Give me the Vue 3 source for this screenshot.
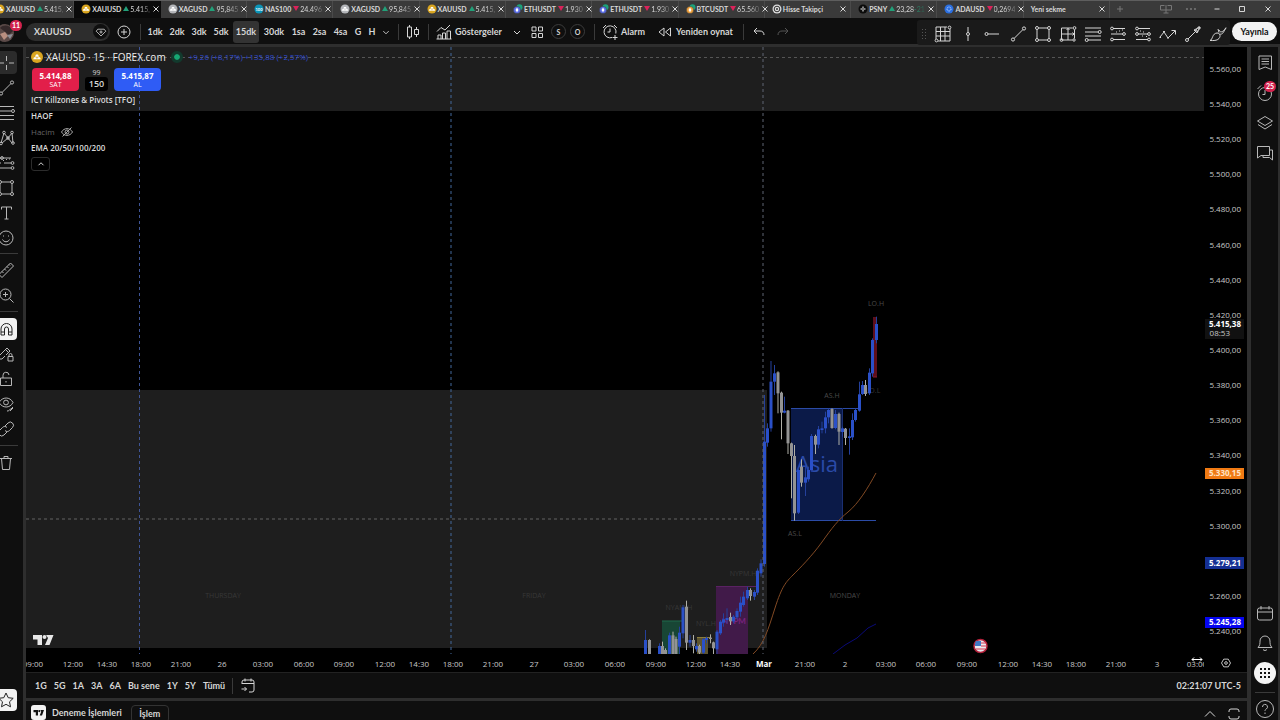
<script setup>
const c = (x, y, r) => `M${x - r} ${y}a${r} ${r} 0 1 0 ${2 * r} 0a${r} ${r} 0 1 0 ${-2 * r} 0`

const icons = {
  cross: 'M10.5 3v5M10.5 12v5M3 10h5M13 10h5',
  trend: 'M6 14.5L15 5.5' + c(5, 15.5, 1.6) + c(16, 4.5, 1.6),
  fib: 'M3 3.5h15M3 8h12M3 12.5h15M3 16.5h15' + c(17, 8, 1.5),
  pattern: 'M5 15L8 5l4 5l4-5l1 10M6 15l6-5l4 5' + c(8, 4.5, 1.3) + c(12, 10, 1.3) + c(16, 4.5, 1.3) + c(17, 15, 1.3) + c(5, 15.5, 1.3),
  forecast: 'M3 5h12M3 10h2M8 10h7M3 15h12M7 7.5h1M10 6.5h1M13 6h1' + c(16.5, 10, 1.4) + c(16.5, 15, 1.4) + c(6, 5, 1.4),
  rect: 'M5.5 4h9M5.5 16h9M4 5.5v9M16 5.5v9' + c(4, 4, 1.5) + c(16, 4, 1.5) + c(4, 16, 1.5) + c(16, 16, 1.5),
  text: 'M5.500 6.500v-2.500h10v2.500M10.500 4v12M8.500 16h4',
  smile: c(10, 10, 7) + 'M7.500 7.500v1M12.500 7.500v1M6.500 11.500c1.500 3 5.500 3 7 0',
  ruler: 'M3 14.500L14.500 3l3 3L6 17.500zM6 11.500l1.500 1.500M8.500 9l1.500 1.500M11 6.500l1.500 1.500M13 4.500l1 1',
  zoom: c(9.5, 9.5, 5.5) + 'M13.500 13.500l4 4M9.500 7v5M7 9.500h5',
  magnet: 'M5 16V10a5.500 5.500 0 0 1 11 0v6h-3.500v-6a2 2 0 0 0-4 0v6zM5 13h3.500M12.500 13H16',
  penlock: 'M3 12L11 4l3 3l-4 4M3 12v3h3l3-3M12 12.500h5v4.500h-5zM13 12.500v-1.500a1.500 1.500 0 0 1 3 0v1.500M9.500 5.500l3 3',
  lock: 'M4.500 9h11v7.500h-11zM7 9V6.500a3 3 0 0 1 6-.500M10 12v1.500',
  eye: 'M3 8.500c3.500-6 11-6 14 0c-3 6-10.500 6-14 0z' + c(10, 8.5, 2.4) + 'M11 17c2 .500 2.500-2 4-2l2-2M14 17l3-3',
  link: 'M9 7l3-3a3 3 0 0 1 4.500 4.500l-3 3a3 3 0 0 1-4.500 0M11 13l-3 3a3 3 0 0 1-4.500-4.500l3-3a3 3 0 0 1 4.500 0',
  trash: 'M4 5.500h12M5.500 5.500l1 11h7l1-11M8 5.500v-2h4v2',
  star: 'M10 3l2.200 4.700l5 .600l-3.700 3.500l1 5L10 14.300l-4.500 2.500l1-5L2.800 8.300l5-.600z',
  vline: 'M10 3v5.500M10 11.500V17' + c(10, 10, 1.5),
  hray: 'M5 10h11' + c(3.5, 10, 1.5),
  gridTool: 'M3 3h11M3 3v12M5 17h12M17 5v12M3 7.500h14M3 12h14M7.500 3v14M12 3v14' + c(16.5, 3.5, 1.4) + c(3.5, 16.5, 1.4),
  range: 'M3.500 4h11M3.500 4v12h11M16.500 5.500v9M10 4v12M3.500 10h13M8.500 6L10 4.500L11.500 6M14.500 8.500L16 10l-1.500 1.500' + c(16.5, 4, 1.4) + c(3.5, 16, 1.4) + c(16, 16, 1.2),
  fibH: 'M2 4h16M2 8h13M2 12h16M5 16h13' + c(16.7, 8, 1.5) + c(3.7, 16, 1.5),
  longPos: 'M5 4.500h12M3 10h12M5 15.500h12M8 8h1M11 7h1M14 6h1' + c(4, 4.5, 1.4) + c(16, 10, 1.4) + c(4, 15.5, 1.4),
  shortPos: 'M5 4.500h12M5 10h10M3 15.500h12M7 7h1M10 8h1M13 12.500h1M9 12h1' + c(4, 4.5, 1.4) + c(4, 10, 1.4) + c(16, 10, 1.4) + c(16, 15.5, 1.4),
  path: 'M2 13l4-5l4 6l7-7M13.500 6.500h4v4M1.500 13.500h1.500M5 7.500h2M9 14h2',
  arrowLine: 'M5 15L13 7' + c(4, 16, 1.5) + 'M11 6l6-3l-3 6zM12 6l3 2M13 5l2 3' + c(16, 4, 1.2),
  brush: 'M2 16.500c3-1 2-7 7-7.500c3 0 4 3 2 5.500c-2 2.500-6 2-9 2zM11 8.500l-1-3.500M11 6c1 3 4 2.500 7-2.500M11.500 10c3 1 4-2 6.500-6',
  bars: 'M6.500 3v2M4.500 5h4v10h-4zM6.500 15v2M13.500 5v2.500M11.500 7.500h4v5h-4zM13.500 12.500V15',
  indicators: 'M3 9.500l4-4l4 2.500l5-5M4 17v-4h3v4M8.500 17v-6h3v6M13 17V9h3.500v8M2.500 17h15',
  grid: 'M5 5h4v4H5zM11.500 5h4v4h-4zM5 11.500h4v4H5zM11.500 11.500h4v4h-4z',
  alarm: 'M12 15.500a6 6 0 1 1 3.800-4M10 6.500V10H7.500M3 6l3-3M14 3l3 3M15 13v5M12.500 15.500h5',
  replay: 'M9 6v8L4 10zM15.500 6v8L10.500 10z',
  undo: 'M8 6L5 9l3 3M5 9h6c2.500 0 4 1.500 4 4',
  redo: 'M12 6l3 3l-3 3M15 9H9c-2.500 0-4 1.500-4 4',
  chev: 'M7 9l3 3l3-3',
  chevUp: 'M5 12.500l5-5l5 5',
  plusCircle: c(10, 10, 6) + 'M10 7v6M7 10h6',
  gem: 'M6 6.500h8l2 2.500l-6 6l-6-6zM10 8v4M8 10h4',
  watch: 'M4 3h12.500v13.500L10.200 14L4 16.500zM6.500 6h7.500M6.500 8.500h7.500M6.500 11h7.500',
  clock: c(10, 11, 6.5) + 'M10 7v4.500H7.500M2.500 6l3.500-3.500',
  layers: 'M10 3.500l7.500 4.500L10 12.500L2.500 8zM3 11.500l7 4.500l7-4.500',
  chat: 'M2.500 3.500h12v9H6l-3.500 2.500zM14.500 7h3v10l-3-2.500H8v-2',
  calendar: 'M4.500 5h11a2 2 0 0 1 2 2v8a2 2 0 0 1-2 2h-11a2 2 0 0 1-2-2V7a2 2 0 0 1 2-2zM2.500 9h15M6 3v3.500M14 3v3.500',
  bell: 'M3 14.500c2-2 2-4 2-6.500a5 5 0 0 1 10 0c0 2.500 0 4.500 2 6.500zM8 16.500c1 1.300 3 1.300 4 0',
  help: c(10, 10, 8.5) + 'M7.500 8a2.500 2.500 0 1 1 3.800 2c-1 .700-1.300 1-1.300 2M10 13.500v1.500',
  goto: 'M4 8V6a2 2 0 0 1 2-2h8a2 2 0 0 1 2 2v8a2 2 0 0 1-2 2h-3M4 7.500h12M7 2.500v3M13 2.500v3M3.500 13h5M6.500 11l2 2l-2 2',
  maximise: 'M5 8V7a2 2 0 0 1 2-2h6a2 2 0 0 1 2 2v1M5 12v1a2 2 0 0 0 2 2h6a2 2 0 0 0 2-2v-1',
  gear: 'M7.500 5.700h5L15 10l-2.500 4.300h-5L5 10z' + c(10, 10, 1.5),
  hidden: 'M4.500 10c2.500-4.500 8.500-4.500 11 0c-2.500 4.500-8.500 4.500-11 0zM5.500 14.500l9-9' + c(10, 10, 2),
  close: 'M7.500 7.500l5 5M12.500 7.500l-5 5',
  plus: 'M10 7v6M7 10h6',
  min: 'M7.500 10h5',
  box: 'M7.500 7.500h5v5h-5z',
  board: 'M8.500 6.500h-4v4.500h11v-4.500h-4M10 6v8M7.500 14h5',
  dots: c(6, 10, 0.7) + c(10, 10, 0.7) + c(14, 10, 0.7),
}

const tabs = [
  { n: 'XAUUSD', k: 'gold', up: true, p: '5.415,' },
  { n: 'XAUUSD', k: 'gold', up: true, p: '5.415,', active: true },
  { n: 'XAGUSD', k: 'silver', up: true, p: '95,845' },
  { n: 'NAS100', k: 'nas', up: false, p: '24.496' },
  { n: 'XAGUSD', k: 'silver', up: true, p: '95,845' },
  { n: 'XAUUSD', k: 'gold', up: true, p: '5.415,' },
  { n: 'ETHUSDT', k: 'eth', up: false, p: '1.930' },
  { n: 'ETHUSDT', k: 'eth', up: false, p: '1.930' },
  { n: 'BTCUSDT', k: 'btc', up: false, p: '65.560' },
  { n: 'Hisse Takipçi', k: 'hisse' },
  { n: 'PSNY', k: 'psny', up: true, p: '23,28', d: '-21' },
  { n: 'ADAUSD', k: 'ada', up: false, p: '0,2694' },
  { n: 'Yeni sekme' },
]

const intervals = [
  ['1dk', 'dk'], ['2dk', 'dk'], ['3dk', 'dk'], ['5dk', 'dk'], ['15dk', 'dk2'], ['30dk', 'dk3'],
  ['1sa', 'sa'], ['2sa', 'sa'], ['4sa', 'sa'], ['G', 'g'], ['H', 'g'],
]
const favourites = ['gridTool', 'vline', 'hray', 'trend', 'rect', 'range', 'fibH', 'longPos', 'shortPos', 'path', 'arrowLine', 'brush']
const tools = [
  ['cross', 'trend', 'fib', 'pattern', 'forecast', 'rect', 'text', 'smile'],
  ['ruler', 'zoom'],
  ['magnet', 'penlock', 'lock', 'eye', 'link'],
  ['trash'],
]
const ranges = ['1G', '5G', '1A', '3A', '6A', 'Bu sene', '1Y', '5Y', 'Tümü']

const priceY = (p) => 68.7 + ((5560 - p) / 20) * 35.16
const prices = Array.from({ length: 17 }, (_, i) => 5560 - i * 20).filter((p) => p !== 5280)
const fmt = (p) => `5.${p - 5000},00`

const times = [
  ['09:00', 33], ['12:00', 73], ['14:30', 107], ['18:00', 141], ['21:00', 181], ['26', 222], ['03:00', 263], ['06:00', 304],
  ['09:00', 344], ['12:00', 385], ['14:30', 419], ['18:00', 453], ['21:00', 493], ['27', 534], ['03:00', 574], ['06:00', 615],
  ['09:00', 656], ['12:00', 696], ['14:30', 730], ['Mar', 764], ['21:00', 805], ['2', 845], ['03:00', 886], ['06:00', 926],
  ['09:00', 967], ['12:00', 1008], ['14:30', 1042], ['18:00', 1076], ['21:00', 1116], ['3', 1157], ['03:00', 1197],
]

// x, body top, body bottom, wick top, wick bottom, rising; in thirds of a pixel from (640, 280)
const candles = [
  [17, 1080, 1123, 1050, 1123, 1], [28, 1080, 1123, 1078, 1123, 0], [58, 1098, 1123, 1090, 1123, 1], [68, 1098, 1123, 1085, 1123, 0],
  [77, 1110, 1123, 1105, 1123, 0], [89, 1066, 1123, 1058, 1123, 1], [99, 1066, 1123, 1055, 1123, 0], [108, 1077, 1123, 1070, 1123, 0],
  [119, 1058, 1100, 1040, 1123, 1], [129, 982, 1060, 975, 1075, 1], [140, 980, 1088, 962, 1110, 0], [150, 1080, 1088, 1065, 1100, 1],
  [160, 1080, 1098, 1065, 1120, 0], [170, 1098, 1108, 1090, 1115, 1], [179, 1098, 1118, 1094, 1123, 0], [190, 1078, 1118, 1074, 1123, 1],
  [200, 1074, 1080, 1070, 1090, 1], [211, 1073, 1077, 1063, 1090, 0], [220, 1087, 1105, 1085, 1123, 0], [231, 1055, 1108, 1050, 1123, 1],
  [241, 1025, 1060, 1020, 1065, 1], [251, 1018, 1028, 1000, 1040, 1], [261, 1014, 1020, 985, 1030, 1], [271, 1011, 1024, 998, 1035, 0],
  [281, 1010, 1024, 1005, 1030, 1], [291, 993, 1012, 985, 1018, 1], [301, 968, 995, 950, 1010, 1], [311, 950, 975, 935, 980, 1],
  [322, 930, 955, 920, 960, 1], [332, 930, 948, 925, 962, 0], [343, 936, 950, 930, 960, 1], [353, 872, 938, 865, 945, 1],
  [363, 850, 880, 838, 890, 1], [373, 485, 852, 345, 860, 1], [383, 445, 488, 430, 500, 1], [393, 305, 445, 243, 455, 1],
  [403, 280, 305, 255, 345, 1], [414, 277, 340, 274, 400, 0], [425, 338, 398, 335, 478, 0], [434, 392, 398, 350, 400, 1],
  [444, 392, 490, 390, 522, 0], [454, 490, 528, 488, 655, 0], [464, 528, 700, 495, 722, 0], [475, 570, 698, 565, 702, 1],
  [485, 560, 608, 538, 620, 0], [496, 592, 608, 560, 648, 1], [505, 570, 598, 560, 605, 1], [515, 468, 570, 462, 575, 1],
  [526, 468, 494, 464, 522, 0], [536, 448, 494, 438, 505, 1], [546, 445, 450, 425, 460, 1], [556, 412, 445, 395, 460, 1],
  [566, 390, 412, 385, 430, 1], [576, 387, 444, 385, 446, 0], [587, 402, 444, 390, 448, 1], [597, 402, 455, 398, 495, 0],
  [607, 445, 456, 440, 470, 1], [617, 446, 474, 444, 495, 0], [628, 469, 474, 445, 524, 1], [638, 420, 472, 400, 480, 1],
  [647, 390, 420, 385, 425, 1], [658, 343, 392, 305, 395, 1], [668, 315, 342, 303, 345, 1], [677, 315, 342, 300, 348, 0],
  [688, 278, 340, 265, 345, 1], [698, 180, 280, 175, 290, 1], [709, 132, 180, 110, 190, 1],
].map(([x, a, b, t, w, up]) => ({
  x: Math.round((640 + x / 3) * 2) / 2, top: 280 + a / 3, h: (b - a) / 3, wt: 280 + t / 3, wb: 280 + w / 3, cls: up ? 'up' : 'down',
}))
</script>

<template>
  <div class="app">
    <header class="tabbar">
      <nav class="tabs" aria-label="Sekmeler">
        <div v-for="(t, i) in tabs" :key="i" class="tab" :class="{ active: t.active }">
          <svg v-if="t.k" class="coin" viewBox="0 0 10 10">
            <template v-if="t.k === 'gold' || t.k === 'silver'">
              <circle cx="5" cy="5" r="4.500" :fill="t.k === 'gold' ? '#d9a520' : '#b4b6ba'" />
              <path d="M4 3h2l.700 1.800H3.300zM2.500 5h2l.500 1.700H1.800zM5.500 5h2l.700 1.700H5z" fill="#fff" />
            </template>
            <template v-else-if="t.k === 'nas'">
              <circle cx="5" cy="5" r="4.500" fill="#0b94b8" />
              <text x="5" y="6.500" class="tiny">100</text>
            </template>
            <template v-else-if="t.k === 'eth' || t.k === 'btc'">
              <circle cx="6.500" cy="3.200" r="3" fill="#1ba27a" />
              <circle cx="4" cy="6" r="3.600" :fill="t.k === 'eth' ? '#5b6ee8' : '#f0a13c'" stroke="#3a3a3a" stroke-width=".500" />
              <path d="M4 3.500L5.500 6L4 8.300L2.500 6z" fill="#fff" />
            </template>
            <template v-else-if="t.k === 'hisse'">
              <circle cx="5" cy="5" r="4.500" fill="#ddd" />
              <circle cx="5" cy="5" r="2.800" fill="none" stroke="#333" />
              <circle cx="5" cy="5" r="1" fill="#333" />
            </template>
            <template v-else-if="t.k === 'psny'">
              <circle cx="5" cy="5" r="4.500" fill="#0b0b0b" />
              <path d="M5 2.500v2M5 5.500v2M2.500 5h2M5.500 5h2" stroke="#fff" />
            </template>
            <template v-else>
              <circle cx="5" cy="5" r="4.500" fill="#2b6fe0" />
              <circle cx="5" cy="5" r="2" fill="none" stroke="#cfe0ff" stroke-dasharray="1 .600" />
            </template>
          </svg>
          <span class="tname">{{ t.n }}</span>
          <span v-if="t.p" class="tri" :class="t.up ? 'tup' : 'tdn'"></span>
          <span v-if="t.p" class="tprice">{{ t.p }}<span v-if="t.d" class="delta"> {{ t.d }}</span></span>
          <button class="tclose" aria-label="Kapat"><svg class="ico" viewBox="0 0 20 20"><path :d="icons.close" /></svg></button>
        </div>
      </nav>
      <div class="winctl">
        <button class="faint" aria-label="Yeni sekme aç"><svg class="ico" viewBox="0 0 20 20"><path :d="icons.plus" /></svg></button>
        <button class="faint far" aria-label="Düzen"><svg class="ico" viewBox="0 0 20 20"><path :d="icons.board" /></svg></button>
        <button class="faint" aria-label="Menü"><svg class="ico" viewBox="0 0 20 20"><path :d="icons.dots" /></svg></button>
        <button aria-label="Küçült"><svg class="ico" viewBox="0 0 20 20"><path :d="icons.min" /></svg></button>
        <button aria-label="Büyüt"><svg class="ico" viewBox="0 0 20 20"><path :d="icons.box" /></svg></button>
        <button aria-label="Kapat"><svg class="ico" viewBox="0 0 20 20"><path :d="icons.close" /></svg></button>
      </div>
    </header>

    <div class="toolbar">
      <button class="avatar" aria-label="Profil">
        <svg viewBox="0 0 24 20">
          <circle cx="5" cy="11" r="9" fill="#5b4a48" />
          <path d="M0 6c4-4 10-3 13 3l-4 4l-5-4z" fill="#35292a" />
          <path d="M0 12l5-2l3 4l-4 4z" fill="#b98f80" />
          <path d="M7 13l6-1l-3 5z" fill="#8d8f96" />
        </svg>
        <span class="badge">11</span>
      </button>
      <button class="symbol">XAUUSD<span class="gem"><svg class="ico" viewBox="0 0 20 20"><path :d="icons.gem" /></svg></span></button>
      <button class="tb plus" aria-label="Karşılaştır"><svg class="ico" viewBox="0 0 20 20"><path :d="icons.plusCircle" /></svg></button>
      <i class="vsep s1"></i>
      <button v-for="[n, k] in intervals" :key="n" class="iv" :class="[k, { on: n === '15dk' }]">{{ n }}</button>
      <button class="iv g" aria-label="Aralıklar"><svg class="ico" viewBox="0 0 20 20"><path :d="icons.chev" /></svg></button>
      <i class="vsep s2"></i>
      <button class="tb" aria-label="Mumlar"><svg class="ico" viewBox="0 0 20 20"><path :d="icons.bars" /></svg></button>
      <i class="vsep s3"></i>
      <button class="tb lab ind"><svg class="ico" viewBox="0 0 20 20"><path :d="icons.indicators" /></svg>Göstergeler</button>
      <button class="tb" aria-label="Favoriler"><svg class="ico" viewBox="0 0 20 20"><path :d="icons.chev" /></svg></button>
      <button class="tb" aria-label="Düzenler"><svg class="ico" viewBox="0 0 20 20"><path :d="icons.grid" /></svg></button>
      <button class="ring">S</button>
      <button class="ring">O</button>
      <i class="vsep s4"></i>
      <button class="tb lab al"><svg class="ico" viewBox="0 0 20 20"><path :d="icons.alarm" /></svg>Alarm</button>
      <button class="tb lab rep"><svg class="ico" viewBox="0 0 20 20"><path :d="icons.replay" /></svg>Yeniden oynat</button>
      <i class="vsep s5"></i>
      <button class="tb" aria-label="Geri al"><svg class="ico" viewBox="0 0 20 20"><path :d="icons.undo" /></svg></button>
      <button class="tb dim" aria-label="Yinele"><svg class="ico" viewBox="0 0 20 20"><path :d="icons.redo" /></svg></button>
      <div class="favs">
        <svg class="grip" viewBox="0 0 8 12"><path d="M2 1.500h1M5 1.500h1M2 4.500h1M5 4.500h1M2 7.500h1M5 7.500h1M2 10.500h1M5 10.500h1" /></svg>
        <button v-for="f in favourites" :key="f" :aria-label="f"><svg class="ico" viewBox="0 0 20 20"><path :d="icons[f]" /></svg></button>
      </div>
      <button class="publish">Yayınla</button>
    </div>

    <div class="body">
      <aside class="tools">
        <template v-for="(g, i) in tools" :key="i">
          <hr v-if="i" />
          <button v-for="t in g" :key="t" :class="{ sel: t === 'cross', lit: t === 'magnet' }" :aria-label="t">
            <svg class="ico" viewBox="0 0 20 20"><path :d="icons[t]" /></svg>
          </button>
        </template>
        <button class="lit fav" aria-label="Favori çizimler"><svg class="ico" viewBox="0 0 20 20"><path :d="icons.star" /></svg></button>
      </aside>

      <main class="center">
        <section class="chart">
          <div class="plot">
            <svg class="canvas" role="img" aria-label="XAUUSD 15 dakikalık grafik">
              <rect width="100%" height="64" class="zone" />
              <g transform="translate(-26 -47)">
                <rect x="26" y="390" width="741" height="258" class="zone" />
                <g class="note">
                  <text x="223" y="598">THURSDAY</text>
                  <text x="534" y="598">FRIDAY</text>
                  <text x="743" y="576">NYPM.H</text>
                  <text x="679" y="610">NYAM.H</text>
                  <text x="706" y="626">NYL.H</text>
                  <text x="873" y="393">LO.L</text>
                </g>
                <g class="note lighter">
                  <text x="845" y="598">MONDAY</text>
                  <text x="876" y="306">LO.H</text>
                  <text x="832" y="398">AS.H</text>
                  <text x="795" y="536">AS.L</text>
                </g>
                <rect x="662" y="621" width="18" height="33" fill="#184635" />
                <path d="M662 621h20" stroke="#1f6b4c" />
                <rect x="697" y="637" width="11" height="17" fill="#5d5430" />
                <path d="M697 637.500h14" stroke="#8a7c3d" />
                <rect x="716" y="587" width="32" height="67" fill="#411a49" />
                <path d="M716 586.500h41" stroke="#5a2263" />
                <rect x="791" y="408" width="51" height="113" fill="#0b1a48" />
                <path d="M791 408.500h67M791 520.500h85" stroke="#2b4ba6" />
                <path d="M842.500 408v113" stroke="#1a2f72" />
                <rect x="873" y="317" width="4" height="60" fill="#5e0f1c" />
                <path d="M873 377h4" stroke="#8c1a2c" />
                <text x="817" y="472" class="asia">Asia</text>
                <text x="734" y="624" class="nypm">NYPM</text>
                <g v-for="(k, i) in candles" :key="i" :class="k.cls">
                  <path :d="`M${k.x} ${k.wt}V${k.wb}`" />
                  <rect :x="k.x - 1.5" :y="k.top" width="3" :height="k.h" />
                </g>
                <path d="M753 654C764 644 768 630 775 608S786 582 793 575S812 556 822 542S838 520 848 512S868 488 876 473" class="ema" />
                <path d="M833 654L845 645L857 638L868 628L876 624" class="ema2" />
                <path d="M139.500 47V654" class="dash" stroke="#3f5596" />
                <path d="M451 47V654" class="dash" stroke="#43699c" />
                <path d="M763 47V654" class="dash" stroke="#5f6573" />
                <path d="M26 519H763" class="dash" stroke="#636363" />
                <path d="M26 57.500H4000" class="dash" stroke="#555" />
                <path d="M33 635h9v10h-4.500v-5.500H33zM46 635h7.500l-4 10h-4.500l3-7z" fill="#e8e8e8" />
                <circle cx="44.500" cy="637" r="2" fill="#e8e8e8" />
                <circle cx="980.500" cy="646" r="6.500" fill="#e9e9ee" stroke="#b3203a" stroke-width="1.500" />
                <path d="M976 641h5v5h-6c0-2 0-4 1-5z" fill="#3f78c4" />
                <path d="M981 643h5M981 646h5M976 649h9" stroke="#d5374f" />
              </g>
            </svg>
            <div class="legend">
              <div class="title">
                <svg class="gold" viewBox="0 0 12 12"><circle cx="6" cy="6" r="6" fill="#d9a520" /><path d="M5 3.500h2l1 2.200H4zM3 6.300h2.300l.700 2H2.200zM6.700 6.300H9l.800 2H6z" fill="#fff" /></svg>
                <span>XAUUSD · 15 · FOREX.com</span><i class="live"></i>
                <span class="chg">+9,26 (+8,17%) +135,88 (+2,57%)</span>
              </div>
              <div class="trade">
                <button class="sell"><b>5.414,88</b>SAT</button>
                <div class="spread"><span>99</span><b>150</b></div>
                <button class="buy"><b>5.415,87</b>AL</button>
              </div>
              <div class="study">ICT Killzones &amp; Pivots [TFO]</div>
              <div class="study">HAOF</div>
              <div class="study off">Hacim<svg class="ico" viewBox="0 0 20 20"><path :d="icons.hidden" /></svg></div>
              <div class="study">EMA 20/50/100/200</div>
              <button class="fold" aria-label="Daralt"><svg class="ico" viewBox="0 0 20 20"><path :d="icons.chevUp" /></svg></button>
            </div>
          </div>
          <svg class="paxis" aria-label="Fiyat ekseni">
            <g transform="translate(-1204 -47)">
              <text v-for="p in prices" :key="p" x="1241" :y="priceY(p) + 3">{{ fmt(p) }}</text>
              <rect x="1205" y="319" width="39" height="20" fill="#111" />
              <rect x="1205" y="468" width="39" height="11" fill="#f07a13" />
              <rect x="1205" y="557" width="39" height="12" fill="#142f93" />
              <rect x="1205" y="617" width="39" height="11" fill="#0505f0" />
              <text class="strong" x="1241" y="327">5.415,38</text>
              <text x="1230" y="336">08:53</text>
              <text class="strong cream" x="1241" y="476">5.330,15</text>
              <text class="strong" x="1241" y="566">5.279,21</text>
              <text class="strong" x="1241" y="625">5.245,28</text>
            </g>
          </svg>
          <svg class="taxis" aria-label="Zaman ekseni">
            <g transform="translate(-26 -654)">
              <text v-for="([t, x], i) in times" :key="i" :x="x" y="667" :class="{ strong: t === 'Mar' }">{{ t }}</text>
              <path d="M1192 659.500h10M1194 657.500l-2 2l2 2M1200 657.500l2 2l-2 2" class="cursor" />
            </g>
          </svg>
          <button class="axisgear" aria-label="Ayarlar"><svg class="ico" viewBox="0 0 20 20"><path :d="icons.gear" /></svg></button>
        </section>
        <div class="ranges">
          <button v-for="r in ranges" :key="r">{{ r }}</button>
          <i class="vsep"></i>
          <button aria-label="Tarihe git"><svg class="ico" viewBox="0 0 20 20"><path :d="icons.goto" /></svg></button>
          <span class="utc">02:21:07 UTC-5</span>
        </div>
        <div class="panel">
          <span class="tv"><svg viewBox="0 0 15 15"><path d="M2.500 5h4.500v5.500H4.800V7.300H2.500zM9.500 5h3.500l-2 5.500H8.700l1.500-3.800z" fill="#111" /><circle cx="8.300" cy="6.100" r="1.100" fill="#111" /></svg></span>
          <span>Deneme İşlemleri</span>
          <button class="deal">İşlem</button>
          <button class="pi first" aria-label="Aç"><svg class="ico" viewBox="0 0 20 20"><path :d="icons.chevUp" /></svg></button>
          <button class="pi" aria-label="Tam ekran"><svg class="ico" viewBox="0 0 20 20"><path :d="icons.maximise" /></svg></button>
        </div>
      </main>

      <aside class="side">
        <button aria-label="İzleme listesi"><svg class="ico" viewBox="0 0 20 20"><path :d="icons.watch" /></svg></button>
        <button aria-label="Alarmlar"><svg class="ico" viewBox="0 0 20 20"><path :d="icons.clock" /></svg><span class="badge">25</span></button>
        <button aria-label="Nesneler"><svg class="ico" viewBox="0 0 20 20"><path :d="icons.layers" /></svg></button>
        <button aria-label="Sohbet"><svg class="ico" viewBox="0 0 20 20"><path :d="icons.chat" /></svg></button>
        <button class="low" aria-label="Takvim"><svg class="ico" viewBox="0 0 20 20"><path :d="icons.calendar" /></svg></button>
        <button aria-label="Bildirimler"><svg class="ico" viewBox="0 0 20 20"><path :d="icons.bell" /></svg></button>
        <button aria-label="Uygulamalar"><svg class="apps" viewBox="0 0 22 22"><circle cx="11" cy="11" r="11" fill="#f4f4f4" /><path d="M6 7h2M10 7h2M14 7h2M6 11h2M10 11h2M14 11h2M6 15h2M10 15h2M14 15h2" stroke="#111" stroke-width="2" /></svg></button>
        <hr />
        <button aria-label="Yardım"><svg class="ico" viewBox="0 0 20 20"><path :d="icons.help" /></svg></button>
      </aside>
    </div>
  </div>
</template>

<style>
body { background: #2e2e2e; overflow: hidden; }
</style>

<style scoped>
.app {
  display: flex; flex-direction: column; height: 100vh; background: #2e2e2e; color: #d6d6d6;
  font: 700 9px/12px "Trebuchet MS", Lato, "Open Sans", sans-serif; overflow: hidden;
}
.app *, .app { box-sizing: border-box; }
button { background: none; border: 0; padding: 0; margin: 0; color: inherit; font: inherit; display: flex; align-items: center; justify-content: center; flex: none; white-space: nowrap; }
.ico { width: 20px; height: 20px; fill: none; stroke: currentColor; stroke-width: 1; flex: none; display: block; }
svg { display: block; }

.tabbar { display: flex; height: 18px; background: #3a3a3a; border-top: 1px solid #5e5e5e; flex: none; }
.tabs { display: flex; flex: 1; margin-left: -12px; min-width: 0; }
.tab { flex: 1 1 0; min-width: 0; display: flex; align-items: center; padding: 0 1px 2px 7px; border-right: 1px solid #4a4a4a; font-size: 7px; color: #d8d8d8; }
.tab.active { background: #0a0a0a; border-color: #0a0a0a; }
.coin { width: 10px; height: 10px; margin-right: 1px; flex: none; }
.tiny { font-size: 4px; fill: #fff; text-anchor: middle; }
.tname { white-space: nowrap; }
.tri { border: 3px solid transparent; margin: 0 1px 0 2px; flex: none; }
.tup { border-top: 0; border-bottom: 5px solid #22a079; }
.tdn { border-bottom: 0; border-top: 5px solid #d9235a; }
.tprice { white-space: nowrap; font-weight: 400; color: #d8d8d8; mask-image: linear-gradient(90deg, #000 50%, #0004); }
.delta { color: #22a079; }
.tclose { width: 12px; margin-left: auto; }
.winctl { display: flex; width: 170px; justify-content: space-between; padding: 0 2px 1px 0; flex: none; }
.winctl .faint { color: #777; }
.winctl .far { margin-left: 20px; }

.toolbar { display: flex; align-items: center; height: 26px; background: #0f0f0f; flex: none; padding-top: 1px; }
.avatar { position: relative; width: 26px; height: 24px; }
.avatar svg { width: 24px; height: 20px; margin-right: 2px; }
.badge { position: absolute; background: #d3234e; color: #fff; font-size: 7px; line-height: 11px; height: 11px; border-radius: 6px; padding: 0 2px; }
.avatar .badge { left: 10px; top: 0; }
.symbol { width: 84px; height: 18px; border-radius: 9px; background: #2d2d2d; justify-content: space-between; padding: 0 2px 0 8px; }
.gem { width: 15px; height: 15px; border-radius: 8px; background: #0f0f0f; display: flex; align-items: center; justify-content: center; }
.gem .ico { width: 16px; height: 16px; }
.tb { width: 20px; }
.tb.plus { margin-left: 4px; }
.dim { color: #555; }
.vsep { width: 1px; height: 16px; background: #3a3a3a; flex: none; }
.s1 { margin: 0 3px 0 6px; }
.iv { height: 22px; border-radius: 3px; }
.iv .ico { width: 18px; height: 18px; }
.iv.on { background: #333; margin: 0 1px; }
.dk { width: 22px; } .dk2 { width: 26px; } .dk3 { width: 28px; } .sa { width: 21px; } .g { width: 14px; }
.s2 { margin: 0 4px 0 5px; }
.s3 { margin: 0 5px; }
.lab { justify-content: flex-start; gap: 1px; }
.ind { width: 73px; }
.ring { width: 15px; height: 15px; border: 1px solid #3c3c3c; border-radius: 8px; font-size: 7px; margin-left: 4px; }
.s4 { margin: 0 5px 0 9px; }
.al { width: 55px; }
.rep { width: 82px; }
.s5 { margin: 0 5px 0 6px; }
.s5 + .tb { margin-right: 4px; }
.favs { display: flex; align-items: center; gap: 5px; height: 25px; margin: 2px 2px 0 auto; padding: 3px 2px 0 3px; background: #1a1a1a; border-radius: 3px; }
.grip { width: 8px; height: 12px; stroke: #555; fill: none; }
.favs button { width: 20px; }
.publish { height: 19px; width: 45px; margin-right: 3px; border-radius: 10px; background: #f2f2f2; color: #111; }

.body { flex: 1; display: flex; gap: 3px; margin-top: 3px; min-height: 0; }
.tools { width: 23px; background: #0f0f0f; padding-top: 4px; display: flex; flex-direction: column; align-items: flex-start; flex: none; color: #b8b8b8; overflow: hidden; }
.tools button { width: 22px; height: 25px; margin-left: -5px; border-radius: 4px; flex: none; }
.tools .sel { background: #2b2b2b; height: 23px; margin-bottom: 1px; }
.tools .lit { background: #f2f2f2; color: #222; height: 22px; margin-top: 2px; margin-bottom: 1px; }
.tools .fav { margin: auto 0 9px -5px; }
.tools hr { width: 18px; height: 1px; border: 0; margin: 4px 0; background: #3a3a3a; flex: none; }
.tools hr:first-of-type { margin: 3px 0; }

.center { flex: 1; display: flex; flex-direction: column; min-width: 0; }
.chart { flex: 1; min-height: 0; background: #000; display: grid; grid-template: minmax(0, 1fr) 18px / minmax(0, 1fr) 43px; }
.plot { position: relative; overflow: hidden; }
.canvas { width: 100%; height: 100%; }
.zone { fill: #1e1e1e; }
.note { fill: #383838; font: 400 7px "Trebuchet MS", "Open Sans", sans-serif; text-anchor: middle; }
.lighter { fill: #4a4a4a; }
.asia { font: 400 22px "Trebuchet MS", "Open Sans", sans-serif; fill: #2a4aa8; text-anchor: middle; }
.nypm { font-size: 8px; fill: #7b237f; text-anchor: middle; }
.up { fill: #2a50c8; stroke: none; }
.up path { stroke: #24409c; }
.down { fill: #939393; }
.down path { stroke: #b0b0a8; }
.ema { fill: none; stroke: #824a24; }
.ema2 { fill: none; stroke: #0a0a78; }
.dash { stroke-dasharray: 3 3; fill: none; }
.paxis, .taxis { width: 100%; height: 100%; overflow: hidden; font: 400 8px "Trebuchet MS", "Open Sans", sans-serif; fill: #c8c8c8; }
.paxis text { text-anchor: end; }
.taxis text { text-anchor: middle; }
.paxis .strong, .taxis .strong { font-weight: 700; fill: #fff; }
.paxis .cream { fill: #ffe3c4; }
.cursor { fill: none; stroke: #fff; }
.axisgear .ico { width: 18px; height: 18px; }

.legend { position: absolute; left: 5px; top: 3px; display: flex; flex-direction: column; align-items: flex-start; font-family: "Trebuchet MS", "Open Sans", sans-serif; }
.title { display: flex; align-items: center; height: 14px; font-size: 10px; font-weight: 400; color: #f0f0f0; }
.gold { width: 12px; height: 12px; margin-right: 3px; }
.live { width: 6px; height: 6px; border-radius: 3px; background: #17a673; outline: 3px solid #123a2d; margin: 0 9px 0 8px; }
.chg { font-size: 8px; color: #2f4bd0; }
.trade { display: flex; gap: 6px; margin-top: 4px; height: 23px; align-items: flex-end; padding-left: 1px; }
.trade button { width: 47px; height: 23px; flex-direction: column; border-radius: 4px; color: #fff; font-size: 7px; font-weight: 400; line-height: 9px; }
.trade button b { font-size: 8px; font-weight: 700; }
.sell { background: #e21f4a; }
.buy { background: #2f5cf5; }
.spread { display: flex; flex-direction: column; align-items: center; font-size: 7px; font-weight: 400; line-height: 9px; }
.spread b { background: #000; border-radius: 3px; width: 23px; height: 14px; line-height: 14px; font-size: 9px; font-weight: 600; text-align: center; }
.study { height: 16px; display: flex; align-items: center; font-size: 8px; font-weight: 600; color: #dcdcdc; }
.trade + .study { margin-top: 1px; }
.off { color: #666; font-weight: 400; gap: 2px; }
.off .ico { color: #aaa; }
.fold { width: 19px; height: 14px; border: 1px solid #2c2c2c; border-radius: 3px; margin: 1px 0 0 0; }
.fold .ico { width: 10px; height: 10px; stroke-width: 2; }

.ranges { height: 26px; background: #0f0f0f; border-top: 1px solid #222; display: flex; align-items: center; gap: 7px; padding: 0 6px 0 9px; flex: none; }
.ranges .vsep { margin-right: -2px; }
.utc { margin-left: auto; }
.panel { height: 19px; margin-top: 3px; background: #0f0f0f; display: flex; align-items: flex-start; padding: 4px 3px 0 5px; flex: none; overflow: hidden; line-height: 16px; }
.tv { width: 15px; height: 15px; background: #f2f2f2; border-radius: 3px; margin-right: 6px; }
.deal { border: 1px solid #333; border-radius: 4px; height: 18px; width: 38px; margin-left: 9px; }
.pi { width: 20px; margin-top: -1px; margin-left: 4px; }
.pi.first { margin-left: auto; }

.side { width: 27px; margin-left: 1px; margin-right: 2px; background: #0f0f0f; display: flex; flex-direction: column; align-items: center; padding-top: 1px; flex: none; color: #b8b8b8; }
.side button { width: 27px; height: 30px; position: relative; }
.side .badge { left: 13px; top: 3px; }
.side .low { margin-top: auto; }
.apps { width: 22px; height: 22px; }
.side hr { width: 20px; height: 1px; border: 0; background: #3a3a3a; margin: 4px 0 5px; }
.side hr + button { height: 22px; }
</style>
